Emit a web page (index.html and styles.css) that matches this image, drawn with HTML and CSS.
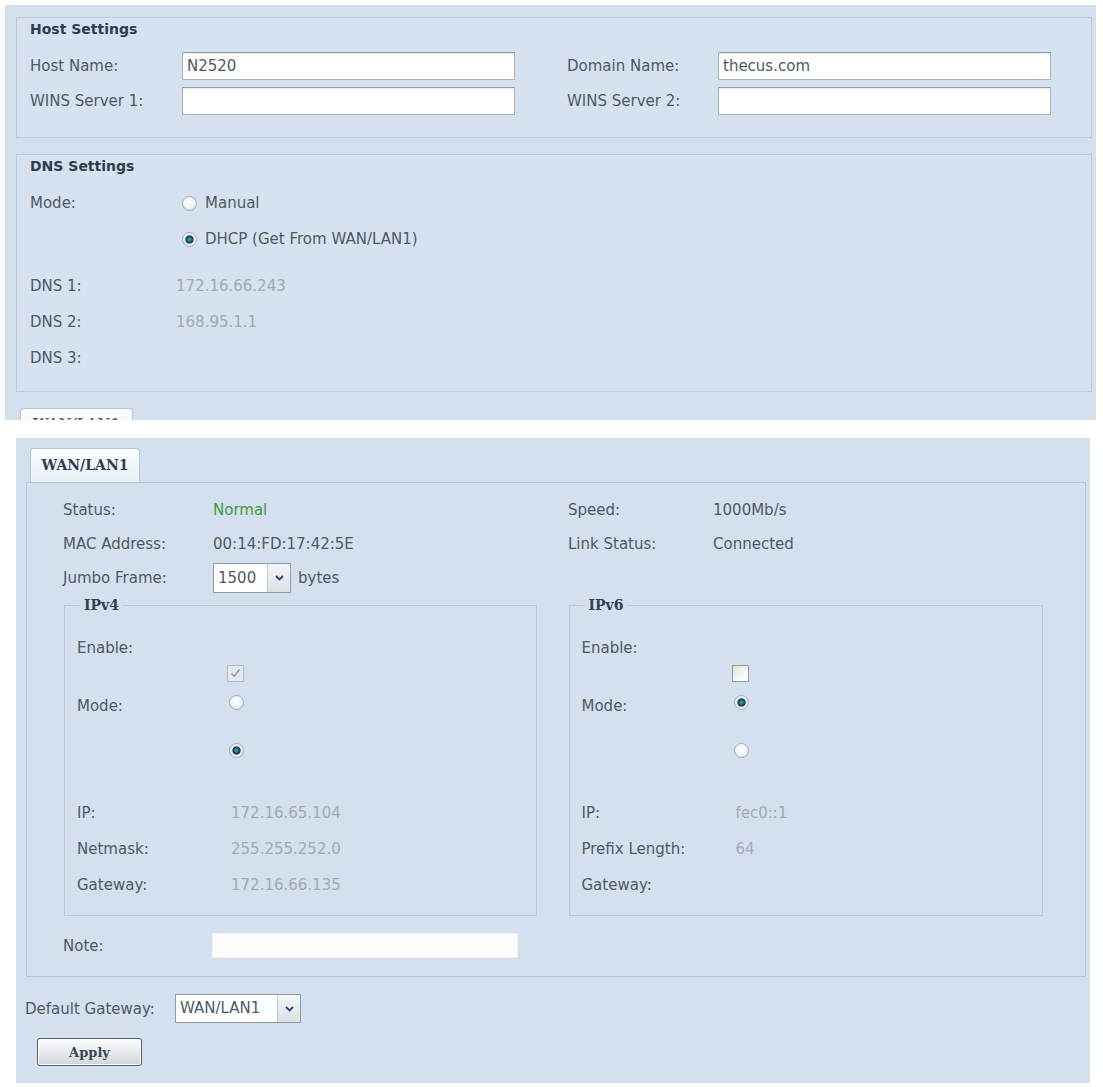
FILE: index.html
```html
<!DOCTYPE html>
<html lang="en">
<head>
<meta charset="UTF-8">
<title>Networking</title>
<link rel="stylesheet" href="styles.css">
</head>
<body>
  <div class="panel panel-top">
    <div class="group group-host">
      <div class="group-title">Host Settings</div>
      <div class="host-grid">
        <label>Host Name:</label><input class="field" type="text" value="N2520">
        <label>Domain Name:</label><input class="field" type="text" value="thecus.com">
        <label>WINS Server 1:</label><input class="field" type="text">
        <label>WINS Server 2:</label><input class="field" type="text">
      </div>
    </div>

    <div class="group group-dns">
      <div class="group-title">DNS Settings</div>
      <div class="mode-list">
        <div class="row row-mode">
          <span class="lbl">Mode:</span>
          <span class="choice"><span class="radio"></span>Manual</span>
        </div>
        <div class="row row-mode">
          <span class="lbl"></span>
          <span class="choice"><span class="radio on"></span>DHCP (Get From WAN/LAN1)</span>
        </div>
      </div>
      <div class="dns-list">
        <div class="row row-dns"><span class="lbl">DNS 1:</span><span class="muted">172.16.66.243</span></div>
        <div class="row row-dns"><span class="lbl">DNS 2:</span><span class="muted">168.95.1.1</span></div>
        <div class="row row-dns"><span class="lbl">DNS 3:</span><span class="muted"></span></div>
      </div>
    </div>

    <div class="tab tab-cut">WAN/LAN1</div>
  </div>

  <div class="panel panel-bottom">
    <div class="tab">WAN/LAN1</div>
    <div class="tab-box">
      <div class="info-grid">
        <span class="lbl">Status:</span><span class="ok">Normal</span>
        <span class="lbl">Speed:</span><span>1000Mb/s</span>
        <span class="lbl">MAC Address:</span><span>00:14:FD:17:42:5E</span>
        <span class="lbl">Link Status:</span><span>Connected</span>
        <span class="lbl">Jumbo Frame:</span>
        <span class="jumbo">
          <span class="select select-jumbo">
            <span class="select-value">1500</span>
            <span class="select-arrow"><svg width="9" height="6" viewBox="0 0 9 6"><path d="M1 1l3.5 3.5L8 1" fill="none" stroke="#274a78" stroke-width="1.8"/></svg></span>
          </span>
          bytes
        </span>
        <span></span><span></span>
      </div>

      <div class="ip-boxes">
        <fieldset class="ip-set">
          <legend>IPv4</legend>
          <div class="ip-row ip-enable"><span class="lbl">Enable:</span></div>
          <div class="ip-row ip-check"><span class="lbl"></span><span class="check checked"><svg width="11" height="10" viewBox="0 0 11 10"><path d="M1.5 5.5l2.8 2.8L9.5 1.5" fill="none" stroke="#8c96a0" stroke-width="1.4"/></svg></span></div>
          <div class="ip-row ip-mode"><span class="lbl">Mode:</span><span class="radio"></span></div>
          <div class="ip-row ip-mode2"><span class="lbl"></span><span class="radio on"></span></div>
          <div class="ip-row ip-val ip-first"><span class="lbl">IP:</span><span class="muted">172.16.65.104</span></div>
          <div class="ip-row ip-val"><span class="lbl">Netmask:</span><span class="muted">255.255.252.0</span></div>
          <div class="ip-row ip-val"><span class="lbl">Gateway:</span><span class="muted">172.16.66.135</span></div>
        </fieldset>

        <fieldset class="ip-set ip-set6">
          <legend>IPv6</legend>
          <div class="ip-row ip-enable"><span class="lbl">Enable:</span></div>
          <div class="ip-row ip-check"><span class="lbl"></span><span class="check"></span></div>
          <div class="ip-row ip-mode"><span class="lbl">Mode:</span><span class="radio on"></span></div>
          <div class="ip-row ip-mode2"><span class="lbl"></span><span class="radio"></span></div>
          <div class="ip-row ip-val ip-first"><span class="lbl">IP:</span><span class="muted">fec0::1</span></div>
          <div class="ip-row ip-val"><span class="lbl">Prefix Length:</span><span class="muted">64</span></div>
          <div class="ip-row ip-val"><span class="lbl">Gateway:</span><span class="muted"></span></div>
        </fieldset>
      </div>

      <div class="row row-note">
        <span class="lbl">Note:</span>
        <input class="note" type="text">
      </div>
    </div>

    <div class="row row-gw">
      <span class="lbl">Default Gateway:</span>
      <span class="select select-gw">
        <span class="select-value">WAN/LAN1</span>
        <span class="select-arrow"><svg width="9" height="6" viewBox="0 0 9 6"><path d="M1 1l3.5 3.5L8 1" fill="none" stroke="#274a78" stroke-width="1.8"/></svg></span>
      </span>
    </div>

    <button class="btn">Apply</button>
  </div>
</body>
</html>
```

FILE: styles.css
```css
body {
  margin: 0;
  background: #fff;
  color: #4f5963;
  font-family: "DejaVu Sans", Verdana, sans-serif;
  font-size: 15px;
}

.panel {
  background: #d4e0ee;
  box-sizing: border-box;
}

.panel-top {
  margin: 5px 0 0 5px;
  width: 1091px;
  height: 415px;
  padding-top: 12px;
  overflow: hidden;
}

.panel-bottom {
  margin: 18px 0 0 16px;
  width: 1074px;
  height: 645px;
  padding-top: 10px;
}

.group {
  margin: 0 4px 0 11px;
  border: 1px solid #bccadb;
  background: #d6e2ef;
  padding: 1px 13px 0 13px;
}

.group-host {
  padding-bottom: 22px;
}

.group-dns {
  margin-top: 16px;
  padding-bottom: 15px;
}

.group-title {
  height: 20px;
  line-height: 20px;
  font-weight: bold;
  font-size: 14px;
  color: #2f3d4c;
}

.host-grid {
  margin-top: 13px;
  display: grid;
  grid-template-columns: 152px 385px 151px 333px;
  grid-auto-rows: 28px;
  row-gap: 7px;
  align-items: center;
}

.field {
  box-sizing: border-box;
  width: 333px;
  height: 28px;
  margin: 0;
  padding: 0 4px;
  border: 1px solid #a7b3bf;
  border-top-color: #8f9ba7;
  background: #fff;
  box-shadow: inset 0 1px 1px rgba(0, 0, 0, 0.08);
  font: inherit;
  color: #4f5963;
}

.row {
  display: flex;
  align-items: center;
}

.lbl {
  flex: none;
  width: 152px;
}

.mode-list {
  margin-top: 9px;
}

.row-mode {
  height: 36px;
}

.choice {
  display: flex;
  align-items: center;
  gap: 8px;
}

.dns-list {
  margin-top: 11px;
}

.row-dns {
  height: 36px;
}

.row-dns .lbl {
  width: 146px;
}

.muted {
  color: #a2aab3;
}

.ok {
  color: #3c9c3c;
}

.radio {
  display: inline-block;
  flex: none;
  width: 13px;
  height: 13px;
  border-radius: 50%;
  border: 1px solid #a3adb7;
  background: radial-gradient(circle at 45% 40%, #fff 0, #f3f5f7 45%, #d0d7de 100%);
}

.radio.on {
  background: radial-gradient(circle, #6aa8be 0, #236479 2px, #103f52 3.6px, #dfe6ec 4.6px, #fff 100%);
}

.tab {
  box-sizing: border-box;
  width: 110px;
  height: 34px;
  margin-left: 14px;
  border: 1px solid #b4c5d8;
  border-bottom: none;
  border-radius: 4px 4px 0 0;
  background: linear-gradient(#fdfeff, #e7eef6);
  text-align: center;
  line-height: 33px;
  font-family: "DejaVu Serif", Georgia, serif;
  font-weight: bold;
  font-size: 14px;
  color: #2f3f52;
}

.tab-cut {
  width: 113px;
  margin: 16px 0 0 15px;
  line-height: 18px;
  padding-top: 6px;
  color: #56657a;
}

.tab-box {
  margin: 0 4px 0 10px;
  border: 1px solid #b4c5d8;
  padding: 10px 42px 18px 36px;
}

.info-grid {
  display: grid;
  grid-template-columns: 150px 355px 145px 1fr;
  grid-template-rows: 34px 34px 33px;
  align-items: center;
}

.jumbo {
  display: flex;
  align-items: center;
  gap: 7px;
}

.select {
  display: inline-flex;
  box-sizing: border-box;
  border: 1px solid #8e9aa6;
  background: #fff;
}

.select-value {
  padding: 0 5px 0 4px;
  color: #4f5963;
}

.select-arrow {
  width: 22px;
  display: flex;
  align-items: center;
  justify-content: center;
  border-left: 1px solid #c3cad2;
  background: linear-gradient(#f5f7f9, #dce1e6);
}

.select-jumbo {
  height: 30px;
  line-height: 28px;
}

.select-jumbo .select-value {
  width: 44px;
}

.select-gw {
  height: 29px;
  line-height: 27px;
}

.select-gw .select-value {
  width: 92px;
}

.ip-boxes {
  display: flex;
  gap: 32px;
  margin: 2px 0 0 1px;
}

.ip-set {
  box-sizing: border-box;
  width: 473px;
  min-width: 0;
  margin: 0;
  padding: 19px 12px 12px 12px;
  border: 1px solid #b9c8da;
}

.ip-set6 {
  width: 475px;
}

.ip-set legend {
  margin-left: 3px;
  padding: 0 4px;
  line-height: 18px;
  font-family: "DejaVu Serif", Georgia, serif;
  font-weight: bold;
  font-size: 14px;
  color: #33404d;
}

.ip-row {
  display: flex;
  align-items: center;
}

.ip-row .lbl {
  width: 150px;
}

.ip-enable {
  height: 30px;
}

.ip-check {
  height: 20px;
}

.ip-mode {
  height: 38px;
}

.ip-mode .lbl {
  padding-top: 8px;
}

.ip-mode2 {
  height: 58px;
}

.ip-row .radio {
  margin-left: 2px;
}

.ip-val {
  height: 36px;
}

.ip-val .muted {
  padding-left: 4px;
}

.ip-first {
  margin-top: 16px;
}

.check {
  box-sizing: border-box;
  width: 17px;
  height: 17px;
  border: 1px solid #919ca7;
  background: linear-gradient(135deg, #e4e0d8, #fbfbfa 70%);
  display: flex;
  align-items: center;
  justify-content: center;
}

.check.checked {
  border-color: #b3bcc5;
  background: #e3e9ef;
}

.row-note {
  height: 25px;
  margin-top: 17px;
}

.row-note .lbl {
  width: 149px;
}

.note {
  box-sizing: border-box;
  width: 306px;
  height: 25px;
  margin: 0;
  border: 1px solid #eef2f6;
  background: #fdfdfd;
  font: inherit;
}

.row-gw {
  height: 29px;
  margin: 17px 0 0 9px;
}

.row-gw .lbl {
  width: 150px;
}

.btn {
  display: block;
  width: 105px;
  height: 28px;
  margin: 15px 0 0 21px;
  border: 1px solid #56616c;
  border-radius: 3px;
  background: linear-gradient(#fcfdfd, #e6e9ed 55%, #cfd5db);
  box-shadow: inset 0 0 0 1px #fff;
  font-family: "DejaVu Serif", Georgia, serif;
  font-weight: bold;
  font-size: 13px;
  color: #3a4652;
}
```
